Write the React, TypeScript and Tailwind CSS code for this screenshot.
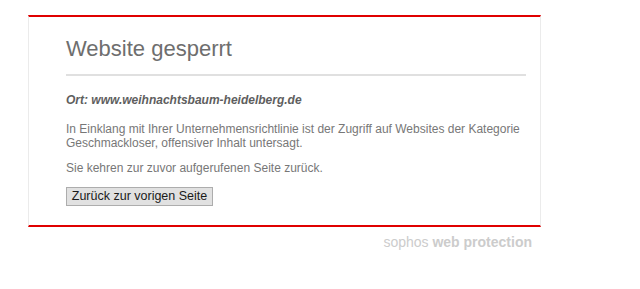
export default function App() {
  return (
    <div className="min-h-[289px] w-[640px] bg-white" style={{ fontFamily: '"Liberation Sans", Arial, sans-serif' }}>
      <div className="ml-[28px] w-[513px] pt-[15px]">
        <div className="border-x border-x-[#ebebeb] border-y-2 border-y-[#e00000] bg-white pl-[37px] pr-[14px] pt-[19px] pb-[19px]">
          <h1 className="text-[22px] leading-[26px] text-[#6e6e6e] font-normal">Website gesperrt</h1>
          <div className="mt-[12px] h-[2px] bg-[#e0e0e0]" />
          <p className="mt-[17px] text-[12px] leading-[14px] font-bold italic text-[#5e5e5e]">
            Ort: www.weihnachtsbaum-heidelberg.de
          </p>
          <p className="mt-[15px] text-[12px] leading-[14px] text-[#777777]">
            In Einklang mit Ihrer Unternehmensrichtlinie ist der Zugriff auf Websites der Kategorie Geschmackloser, offensiver Inhalt untersagt.
          </p>
          <p className="mt-[11px] text-[12px] leading-[14px] text-[#777777]">
            Sie kehren zur zuvor aufgerufenen Seite zurück.
          </p>
          <button className="mt-[12px] block h-[19px] w-[147px] whitespace-nowrap border border-[#adadad] bg-[#e1e1e1] p-0 text-center text-[12.5px] leading-[17px] text-[#1a1a1a]">
            Zurück zur vorigen Seite
          </button>
        </div>
        <div className="mt-[7px] pr-[9px] text-right text-[14px] leading-[16px] text-[#cccccc]">
          sophos <span className="font-bold">web protection</span>
        </div>
      </div>
    </div>
  );
}
